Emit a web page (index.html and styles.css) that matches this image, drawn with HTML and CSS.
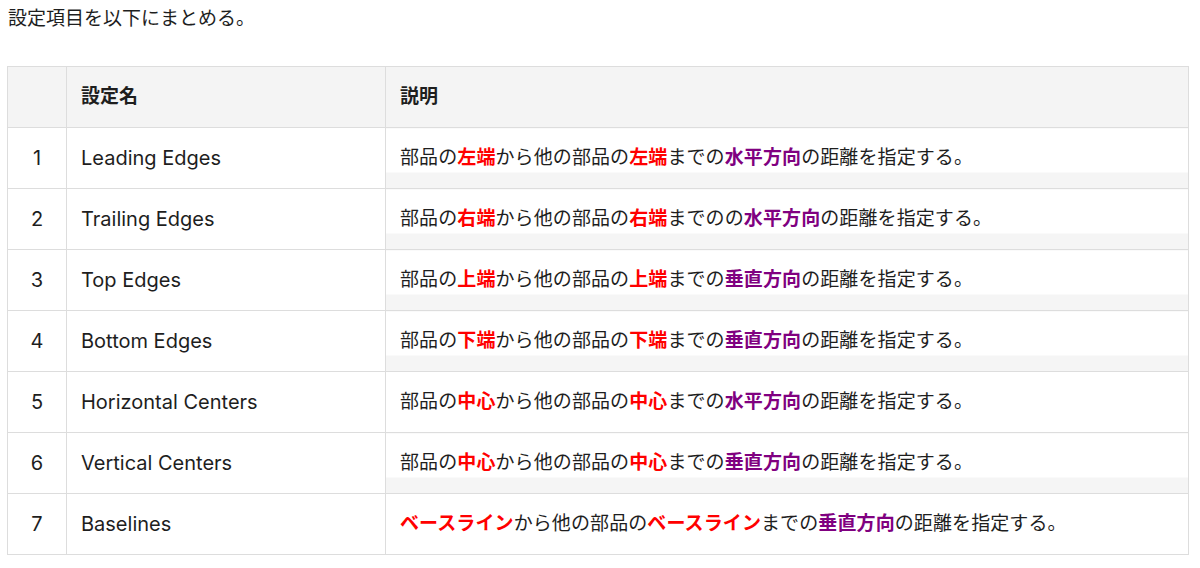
FILE: index.html
```html
<!DOCTYPE html>
<html lang="ja">
<head>
<meta charset="utf-8">
<link rel="stylesheet" href="styles.css">
</head>
<body>
<p class="intro">設定項目を以下にまとめる。</p>
<table class="settings">
  <thead>
    <tr><th class="num"></th><th class="name">設定名</th><th>説明</th></tr>
  </thead>
  <tbody>
    <tr><td class="num">1</td><td class="label">Leading Edges</td><td class="desc band">部品の<b class="r">左端</b>から他の部品の<b class="r">左端</b>までの<b class="p">水平方向</b>の距離を指定する。</td></tr>
    <tr><td class="num">2</td><td class="label">Trailing Edges</td><td class="desc band">部品の<b class="r">右端</b>から他の部品の<b class="r">右端</b>までのの<b class="p">水平方向</b>の距離を指定する。</td></tr>
    <tr><td class="num">3</td><td class="label">Top Edges</td><td class="desc band">部品の<b class="r">上端</b>から他の部品の<b class="r">上端</b>までの<b class="p">垂直方向</b>の距離を指定する。</td></tr>
    <tr><td class="num">4</td><td class="label">Bottom Edges</td><td class="desc band">部品の<b class="r">下端</b>から他の部品の<b class="r">下端</b>までの<b class="p">垂直方向</b>の距離を指定する。</td></tr>
    <tr><td class="num">5</td><td class="label">Horizontal Centers</td><td class="desc">部品の<b class="r">中心</b>から他の部品の<b class="r">中心</b>までの<b class="p">水平方向</b>の距離を指定する。</td></tr>
    <tr><td class="num">6</td><td class="label">Vertical Centers</td><td class="desc band">部品の<b class="r">中心</b>から他の部品の<b class="r">中心</b>までの<b class="p">垂直方向</b>の距離を指定する。</td></tr>
    <tr><td class="num">7</td><td class="label">Baselines</td><td class="desc"><b class="r">ベースライン</b>から他の部品の<b class="r">ベースライン</b>までの<b class="p">垂直方向</b>の距離を指定する。</td></tr>
  </tbody>
</table>
</body>
</html>
```
FILE: styles.css
```css
html, body {
  margin: 0;
  padding: 0;
  background: #fff;
}
body {
  font-family: "Inter", "Noto Sans CJK JP", sans-serif;
  font-size: 19px;
  line-height: 22px;
  color: #1e1e1e;
}
.intro {
  margin: 8px 0 0 8px;
}
.settings {
  margin: 36px 0 0 7px;
  width: 1182px;
  border-collapse: collapse;
}
.settings th,
.settings td {
  border: 1px solid #dddddd;
  padding: 19px 14px;
  text-align: left;
  vertical-align: middle;
}
.settings thead th {
  background: #f4f4f4;
  font-weight: 700;
}
.settings .num {
  width: 30px;
  text-align: center;
}
.settings .name {
  width: 290px;
}
.settings td.num,
.settings td.label {
  font-size: 20px;
}
.settings .desc {
  letter-spacing: 0.1px;
}
.settings .desc.band {
  background: linear-gradient(to bottom, #fff 0, #fff calc(100% - 16px), #f5f5f5 calc(100% - 16px), #f5f5f5 100%);
}
b.r {
  color: #ff0000;
  font-weight: 700;
}
b.p {
  color: #800080;
  font-weight: 700;
}
```
